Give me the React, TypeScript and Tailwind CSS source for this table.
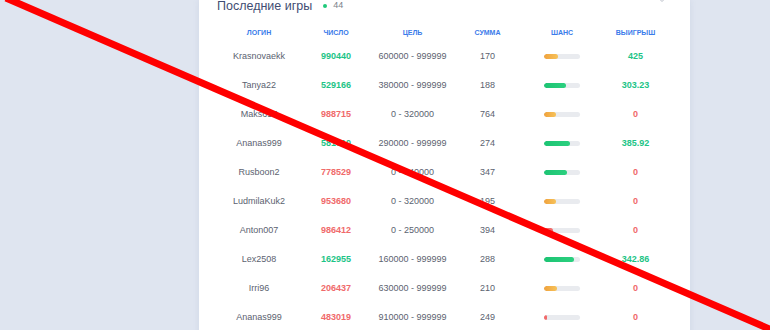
import { ChevronDown } from "lucide-react";

type Game = {
    login: string;
    num: string;
    range: string;
    sum: number;
    chance: number;
    win: string;
};

const games: Game[] = [
    { login: "Krasnovaekk", num: "990440", range: "600000 - 999999", sum: 170, chance: 40, win: "425" },
    { login: "Tanya22", num: "529166", range: "380000 - 999999", sum: 188, chance: 62, win: "303.23" },
    { login: "Maks657", num: "988715", range: "0 - 320000", sum: 764, chance: 32, win: "0" },
    { login: "Ananas999", num: "581710", range: "290000 - 999999", sum: 274, chance: 71, win: "385.92" },
    { login: "Rusboon2", num: "778529", range: "0 - 640000", sum: 347, chance: 64, win: "0" },
    { login: "LudmilaKuk2", num: "953680", range: "0 - 320000", sum: 195, chance: 32, win: "0" },
    { login: "Anton007", num: "986412", range: "0 - 250000", sum: 394, chance: 25, win: "0" },
    { login: "Lex2508", num: "162955", range: "160000 - 999999", sum: 288, chance: 84, win: "342.86" },
    { login: "Irri96", num: "206437", range: "630000 - 999999", sum: 210, chance: 37, win: "0" },
    { login: "Ananas999", num: "483019", range: "910000 - 999999", sum: 249, chance: 9, win: "0" },
];

const cols = "grid grid-cols-[76px_78px_75px_75px_74px_73px] items-center text-center";

function ChanceBar({ chance }: { chance: number }) {
    // colour by chance: low red, mid orange, high green
    const fill =
        chance < 30
            ? "bg-[#f26a6a]"
            : chance < 50
              ? "bg-gradient-to-r from-[#f0a23c] to-[#f6c25a]"
              : "bg-gradient-to-r from-[#1cc473] to-[#2bd07f]";
    return (
        <div className="mx-auto h-[5px] w-[36px] overflow-hidden rounded-full bg-[#e9ebef]">
            <div className={`h-full rounded-full ${fill}`} style={{ width: `${Math.max(chance, 6)}%` }} />
        </div>
    );
}

export default function App() {
    return (
        <div className="relative h-[330px] w-[770px] overflow-hidden bg-[#dfe5f0] font-['Liberation_Sans',Arial,sans-serif]">
            <div className="flex pl-[199px]">
                <div className="h-[340px] w-[491px] bg-white pl-[22px] pr-[20px] shadow-[0_0_6px_rgba(120,140,180,0.15)]">
                    <div className="-mt-[3px] flex h-[18px] items-center">
                        <span className="ml-[-4px] text-[12.5px] text-[#3f4d73]">Последние игры</span>
                        <span className="ml-[11px] h-[4px] w-[4px] rounded-full bg-[#1fc97a]" />
                        <span className="ml-[6px] text-[9px] text-[#7a7f8a]">44</span>
                        <ChevronDown className="ml-auto mr-[2px] h-[12px] w-[12px] -translate-y-[6px] text-[#a3a9b5]" strokeWidth={1.5} />
                    </div>
                    <div className={`${cols} mt-[12px] h-[12px] text-[7px] font-bold uppercase text-[#3a7bea]`}>
                        <span>Логин</span>
                        <span>Число</span>
                        <span>Цель</span>
                        <span>Сумма</span>
                        <span>Шанс</span>
                        <span>Выигрыш</span>
                    </div>
                    <div className="mt-[3px]">
                        {games.map((g, i) => {
                            const won = g.win !== "0";
                            return (
                                <div key={i} className={`${cols} h-[29px] text-[9px] text-[#5b6270]`}>
                                    <span>{g.login}</span>
                                    <span className={`font-bold ${won ? "text-[#1dc486]" : "text-[#f06a6a]"}`}>{g.num}</span>
                                    <span className="whitespace-nowrap">{g.range}</span>
                                    <span>{g.sum}</span>
                                    <ChanceBar chance={g.chance} />
                                    <span className={`font-bold ${won ? "text-[#1dc486]" : "text-[#f06a6a]"}`}>{g.win}</span>
                                </div>
                            );
                        })}
                    </div>
                </div>
            </div>
            <svg className="pointer-events-none absolute inset-0" width="770" height="330" viewBox="0 0 770 330">
                <line x1="6" y1="-2" x2="774" y2="331" stroke="#ff0000" strokeWidth="7" />
            </svg>
        </div>
    );
}
